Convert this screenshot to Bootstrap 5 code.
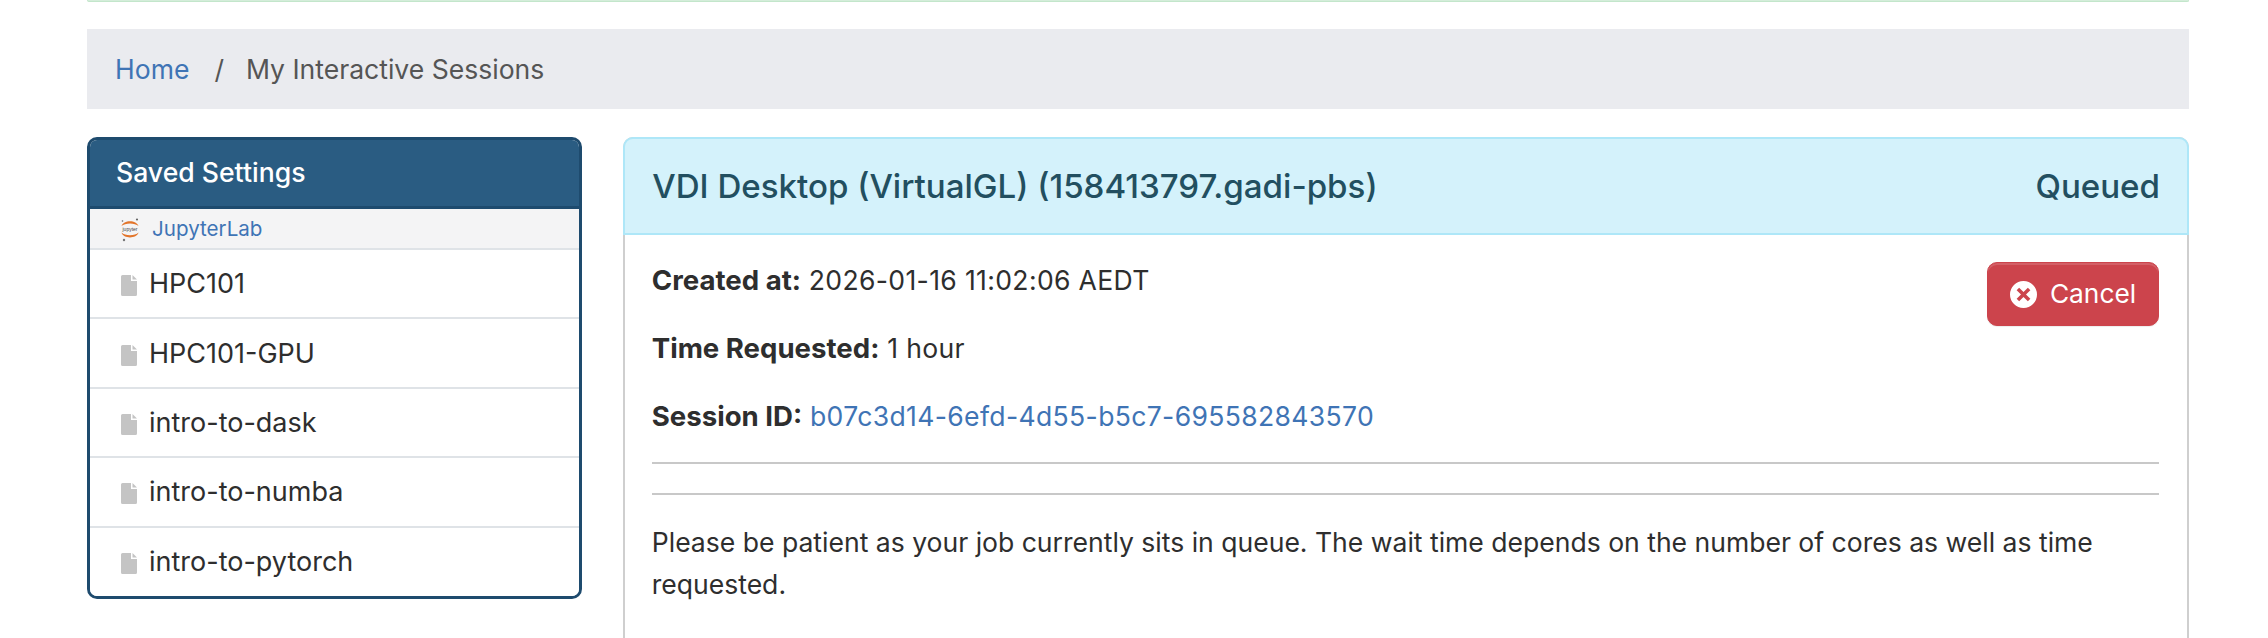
<!DOCTYPE html>
<html lang="en">
<head>
<meta charset="utf-8">
<title>My Interactive Sessions</title>
<link href="https://cdn.jsdelivr.net/npm/bootstrap@5.3.0/dist/css/bootstrap.min.css" rel="stylesheet">
<style>
body{font-family:Inter,"Liberation Sans",sans-serif;font-size:26.55px;line-height:42px;color:#2e2e2e;background:#fff;}
a{color:#3f74b5;text-decoration:none;}
.page-wrap{padding:0 79px 0 87px;}
.flash-edge{height:2px;border:1px solid #c3e6cb;border-top:0;border-radius:0 0 4px 4px;background:#d4edda;margin-bottom:27px;}
.crumbs{background:#eaebef;padding:19px 28px;height:80px;margin-bottom:28px;--bs-breadcrumb-item-padding-x:24px;line-height:42px;}
.crumbs .breadcrumb-item{color:#555;}
.crumbs .breadcrumb-item+.breadcrumb-item{padding-left:25px;}
.crumbs .breadcrumb-item+.breadcrumb-item::before{color:#555;padding-right:22px;}
.main-row{--bs-gutter-x:41px;}
.saved-card{border:3px solid #1e4b6e;border-radius:10px;overflow:hidden;--bs-card-border-color:#1e4b6e;}
.saved-head{background:#2a5c82;color:#fff;font-weight:500;font-size:26.6px;height:66px;padding:0 26px 3px;display:flex;align-items:center;}
.saved-group .list-group-item{border-width:0 0 2px;border-color:#dfe3e7;padding:1px 31px 0;display:flex;align-items:center;gap:12px;height:69.4px;color:#2e2e2e;font-size:27px;}
.saved-group .list-group-item:last-child{border-bottom:0;height:68px;}
.saved-group .lab-row{height:41px;padding:0 0 0 28px;background:#f4f4f5;font-size:20.6px;color:#3f74b5;gap:10px;}
.doc-icon{width:16px;height:21px;flex:none;fill:#c4c4c4;margin-top:3px;}
.jup-icon{width:24px;height:26px;flex:none;}
.jup-text{font-size:5px;fill:#444;font-family:"Liberation Sans",sans-serif;}
.session-card{border:2px solid #cfcfcf;border-bottom:0;border-radius:10px 10px 0 0;height:700px;}
.session-head{background:#d4f2fb;border:2px solid #aee7f8;margin:-2px -2px 0;height:98px;border-radius:10px 10px 0 0;padding:0 27px 0 27.5px;color:#224f60;font-size:33.1px;font-weight:500;display:flex;align-items:center;justify-content:space-between;}
.session-body{padding:24px 28px 24px 27px;}
.meta-line{margin:0 0 26px;letter-spacing:.35px;}
.meta-line b{font-weight:700;font-size:27.6px;letter-spacing:0;}
.cancel-btn{width:172px;height:64px;margin-top:3px;background:#cc444c;border:1px solid #cc444c;border-radius:10px;color:#fff;font-size:26.3px;display:flex;align-items:center;justify-content:center;gap:13px;padding:0;box-shadow:inset 0 2px 0 rgba(255,255,255,.15),0 1px 1px rgba(0,0,0,.075);}
.cancel-icon{width:27px;height:27px;fill:#fff;}
.rule-line{border:0;border-top:2px solid #c8c8c8;opacity:1;margin:-1px 0 29px;}
.rule-line+.rule-line{margin:0 0 26px;}
</style>
</head>
<body class="vh-100 overflow-hidden">
<div class="page-wrap">
  <div class="flash-edge"></div>
  <nav aria-label="breadcrumb">
    <ol class="breadcrumb crumbs">
      <li class="breadcrumb-item"><a href="#">Home</a></li>
      <li class="breadcrumb-item active" aria-current="page">My Interactive Sessions</li>
    </ol>
  </nav>
  <div class="row main-row">
    <div class="col-3">
      <div class="card saved-card">
        <div class="saved-head">Saved Settings</div>
        <div class="list-group list-group-flush saved-group">
          <a href="#" class="list-group-item lab-row">
            <svg class="jup-icon" viewBox="0 0 24 26"><path d="M3.5 10C5.5 3.5 18.5 3.5 20.5 10C17 6.6 7 6.6 3.5 10Z" fill="#e2752b"/><path d="M3.5 16.5C5.5 23 18.5 23 20.5 16.5C17 20 7 20 3.5 16.5Z" fill="#e2752b"/><text class="jup-text" x="12" y="14.8" text-anchor="middle">jupyter</text><circle cx="19" cy="3.5" r="1.1" fill="#666"/><circle cx="4.5" cy="5" r=".8" fill="#666"/><circle cx="6" cy="24" r="1.2" fill="#777"/></svg>
            JupyterLab
          </a>
          <a href="#" class="list-group-item"><svg class="doc-icon" viewBox="0 0 16 21"><path d="M1.5 0H10V6H16V19.5A1.5 1.5 0 0 1 14.5 21H1.5A1.5 1.5 0 0 1 0 19.5V1.5A1.5 1.5 0 0 1 1.5 0ZM11.5 0L16 4.5H11.5Z"/></svg>HPC101</a>
          <a href="#" class="list-group-item"><svg class="doc-icon" viewBox="0 0 16 21"><path d="M1.5 0H10V6H16V19.5A1.5 1.5 0 0 1 14.5 21H1.5A1.5 1.5 0 0 1 0 19.5V1.5A1.5 1.5 0 0 1 1.5 0ZM11.5 0L16 4.5H11.5Z"/></svg>HPC101-GPU</a>
          <a href="#" class="list-group-item"><svg class="doc-icon" viewBox="0 0 16 21"><path d="M1.5 0H10V6H16V19.5A1.5 1.5 0 0 1 14.5 21H1.5A1.5 1.5 0 0 1 0 19.5V1.5A1.5 1.5 0 0 1 1.5 0ZM11.5 0L16 4.5H11.5Z"/></svg>intro-to-dask</a>
          <a href="#" class="list-group-item"><svg class="doc-icon" viewBox="0 0 16 21"><path d="M1.5 0H10V6H16V19.5A1.5 1.5 0 0 1 14.5 21H1.5A1.5 1.5 0 0 1 0 19.5V1.5A1.5 1.5 0 0 1 1.5 0ZM11.5 0L16 4.5H11.5Z"/></svg>intro-to-numba</a>
          <a href="#" class="list-group-item"><svg class="doc-icon" viewBox="0 0 16 21"><path d="M1.5 0H10V6H16V19.5A1.5 1.5 0 0 1 14.5 21H1.5A1.5 1.5 0 0 1 0 19.5V1.5A1.5 1.5 0 0 1 1.5 0ZM11.5 0L16 4.5H11.5Z"/></svg>intro-to-pytorch</a>
        </div>
      </div>
    </div>
    <div class="col-9">
      <div class="card session-card">
        <div class="session-head"><span>VDI Desktop (VirtualGL) (158413797.gadi-pbs)</span><span>Queued</span></div>
        <div class="session-body">
          <div class="d-flex justify-content-between align-items-start">
            <div>
              <p class="meta-line"><b>Created at:</b> 2026-01-16 11:02:06 AEDT</p>
              <p class="meta-line"><b>Time Requested:</b> 1 hour</p>
              <p class="meta-line"><b>Session ID:</b> <a href="#">b07c3d14-6efd-4d55-b5c7-695582843570</a></p>
            </div>
            <button type="button" class="btn cancel-btn">
              <svg class="cancel-icon" viewBox="0 0 26 26"><path fill-rule="evenodd" d="M13 0a13 13 0 1 0 0 26a13 13 0 0 0 0-26ZM8.8 6.4L13 10.6L17.2 6.4L19.6 8.8L15.4 13L19.6 17.2L17.2 19.6L13 15.4L8.8 19.6L6.4 17.2L10.6 13L6.4 8.8Z"/></svg>
              Cancel
            </button>
          </div>
          <hr class="rule-line">
          <hr class="rule-line">
          <p class="mb-0">Please be patient as your job currently sits in queue. The wait time depends on the number of cores as well as time requested.</p>
        </div>
      </div>
    </div>
  </div>
</div>
<script src="https://cdn.jsdelivr.net/npm/bootstrap@5.3.0/dist/js/bootstrap.bundle.min.js"></script>
</body>
</html>
